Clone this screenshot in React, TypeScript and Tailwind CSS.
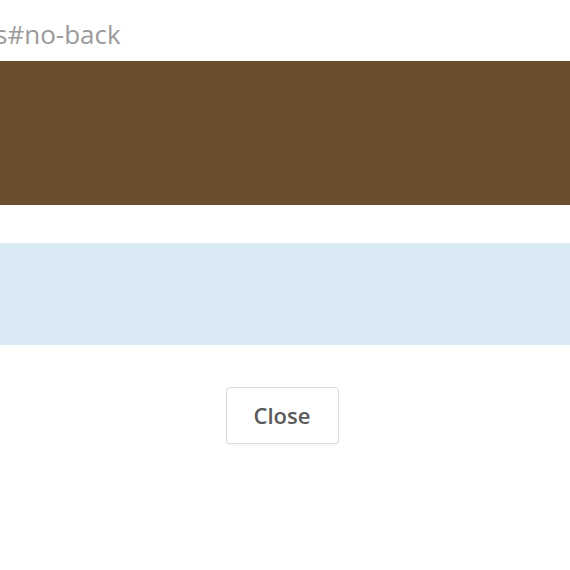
export default function App() {
  return (
    <div className="h-[570px] w-[570px] overflow-hidden bg-white font-['Open_Sans',sans-serif]">
      {/* Link text, cut at the left edge */}
      <div className="h-[61px] pt-[17px]">
        <p className="-ml-[5px] whitespace-nowrap text-[26px] leading-[34px] text-[#9a9a9a]">s#no-back</p>
      </div>

      {/* Brown band */}
      <div className="h-[144px] bg-[#6b4f2c]" />

      <div className="h-[38px]" />

      {/* Light blue band */}
      <div className="h-[102px] bg-[#d9eaf5]" />

      {/* Close button */}
      <div className="flex justify-center pt-[42px]">
        <button className="h-[57px] w-[113px] -translate-x-[3px] rounded-[4px] border border-[#dcdcdc] bg-white text-[22px] font-semibold text-[#5a5a5a] shadow-[0_1px_2px_rgba(0,0,0,0.06)]">
          Close
        </button>
      </div>
    </div>
  );
}
